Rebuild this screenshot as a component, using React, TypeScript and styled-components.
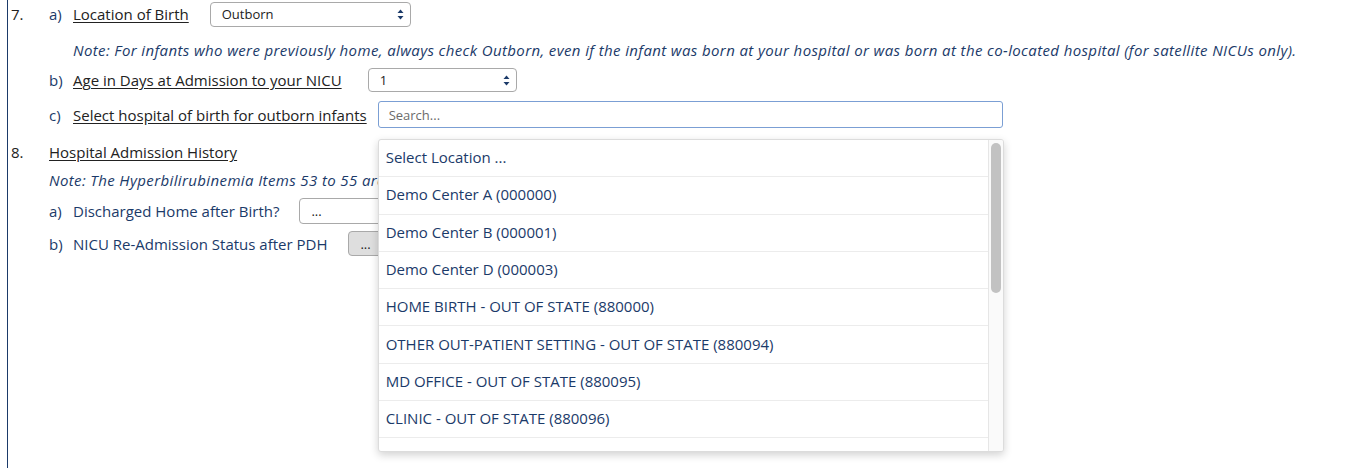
import React from "react";
import styled, { createGlobalStyle } from "styled-components";

const NAVY = "#1b3a69";
const INK = "#222222";

const Global = createGlobalStyle`
  html, body { margin: 0; padding: 0; background: #ffffff; }
  body { font-family: "Open Sans", "Noto Sans", Arial, sans-serif; font-size: 15px; color: ${INK}; }
  * { box-sizing: border-box; }
`;

const Page = styled.div`
  padding-left: 7px;
  min-height: 468px;
  overflow: hidden;
`;

const Section = styled.div`
  border-left: 1px solid ${NAVY};
  min-height: 468px;
  padding-left: 3px;
  display: flex;
  flex-direction: column;
`;

const Row = styled.div<{ $h: number; $mt: number }>`
  display: flex;
  align-items: center;
  height: ${(p) => p.$h}px;
  margin-top: ${(p) => p.$mt}px;
  position: relative;
`;

const Num = styled.span`
  width: 38px;
  flex: none;
  color: ${INK};
`;

const Letter = styled.span<{ $indent?: boolean }>`
  width: 24px;
  flex: none;
  color: ${NAVY};
  margin-left: ${(p) => (p.$indent ? 38 : 0)}px;
`;

const Label = styled.span<{ $under?: boolean }>`
  color: ${(p) => (p.$under ? INK : NAVY)};
  text-decoration: ${(p) => (p.$under ? "underline" : "none")};
  text-underline-offset: 2px;
  white-space: nowrap;
`;

const Note = styled.div<{ $indent: number }>`
  padding-left: ${(p) => p.$indent}px;
  font-style: italic;
  letter-spacing: 0.38px;
  color: ${NAVY};
  white-space: nowrap;
`;

const Select = styled.div<{ $w: number; $h: number; $ml: number; $gray?: boolean }>`
  flex: none;
  width: ${(p) => p.$w}px;
  height: ${(p) => p.$h}px;
  margin-left: ${(p) => p.$ml}px;
  border: 1px solid #a9a9a9;
  border-radius: 4px;
  background: ${(p) => (p.$gray ? "#dedede" : "#ffffff")};
  display: flex;
  align-items: center;
  justify-content: space-between;
  padding: 0 6px 0 11px;
  font-size: 13px;
  color: ${INK};
`;

const ControlWrap = styled.div<{ $ml: number }>`
  position: relative;
  margin-left: ${(p) => p.$ml}px;
  flex: none;
`;

const Search = styled.div`
  width: 625px;
  height: 27px;
  border: 1px solid #7b9fd4;
  border-radius: 3px;
  display: flex;
  align-items: center;
  padding-left: 10px;
  font-size: 13px;
  color: #6b6b6b;
  background: #fff;
`;

const Dropdown = styled.div`
  position: absolute;
  top: calc(100% + 11px);
  left: 0;
  width: 626px;
  height: 313px;
  background: #ffffff;
  border: 1px solid #dcdcdc;
  border-radius: 3px;
  box-shadow: 0 3px 8px rgba(0, 0, 0, 0.18);
  display: flex;
  overflow: hidden;
  z-index: 10;
`;

const List = styled.div`
  flex: 1;
  overflow: hidden;
`;

const Item = styled.div`
  height: 37.3px;
  border-bottom: 1px solid #ececec;
  display: flex;
  align-items: center;
  padding: 0 0 2px 7px;
  color: ${NAVY};
  white-space: nowrap;
`;

const Track = styled.div`
  width: 15px;
  flex: none;
  border-left: 1px solid #e6e6e6;
  background: #fafafa;
  padding: 3px 2px 0 2px;
`;

const Thumb = styled.div`
  height: 150px;
  border-radius: 5px;
  background: #c2c2c2;
`;

const Arrows = () => (
  <svg width="7" height="11" viewBox="0 0 7 11">
    <path d="M3.5 0.5 L6.5 4 H0.5 Z" fill={NAVY} />
    <path d="M3.5 10.5 L6.5 7 H0.5 Z" fill={NAVY} />
  </svg>
);

const items = [
  "Select Location ...",
  "Demo Center A (000000)",
  "Demo Center B (000001)",
  "Demo Center D (000003)",
  "HOME BIRTH - OUT OF STATE (880000)",
  "OTHER OUT-PATIENT SETTING - OUT OF STATE (880094)",
  "MD OFFICE - OUT OF STATE (880095)",
  "CLINIC - OUT OF STATE (880096)",
  "EMERGENCY ROOM - OUT OF STATE (880097)",
];

export default function App() {
  return (
    <Page>
      <Global />
      <Section>
        <Row $h={28} $mt={0}>
          <Num>7.</Num>
          <Letter>a)</Letter>
          <Label $under>Location of Birth</Label>
          <Select $w={201} $h={25} $ml={21}>
            <span>Outborn</span>
            <Arrows />
          </Select>
        </Row>
        <Row $h={20} $mt={12}>
          <Note $indent={62}>
            Note: For infants who were previously home, always check Outborn, even if the infant was born at your
            hospital or was born at the co-located hospital (for satellite NICUs only).
          </Note>
        </Row>
        <Row $h={24} $mt={8}>
          <Letter $indent>b)</Letter>
          <Label $under>Age in Days at Admission to your NICU</Label>
          <Select $w={149} $h={24} $ml={26}>
            <span>1</span>
            <Arrows />
          </Select>
        </Row>
        <Row $h={27} $mt={9}>
          <Letter $indent>c)</Letter>
          <Label $under>Select hospital of birth for outborn infants</Label>
          <ControlWrap $ml={11}>
            <Search>Search...</Search>
            <Dropdown>
              <List>
                {items.map((t) => (
                  <Item key={t}>{t}</Item>
                ))}
              </List>
              <Track>
                <Thumb />
              </Track>
            </Dropdown>
          </ControlWrap>
        </Row>
        <Row $h={20} $mt={14}>
          <Num>8.</Num>
          <Label $under>Hospital Admission History</Label>
        </Row>
        <Row $h={20} $mt={8}>
          <Note $indent={38}>
            Note: The Hyperbilirubinemia Items 53 to 55 are only required for infants discharged home after birth.
          </Note>
        </Row>
        <Row $h={26} $mt={8}>
          <Letter $indent>a)</Letter>
          <Label>Discharged Home after Birth?</Label>
          <Select $w={120} $h={26} $ml={20}>
            <span>...</span>
          </Select>
        </Row>
        <Row $h={25} $mt={7}>
          <Letter $indent>b)</Letter>
          <Label>NICU Re-Admission Status after PDH</Label>
          <Select $w={60} $h={25} $ml={21} $gray>
            <span>...</span>
          </Select>
        </Row>
      </Section>
    </Page>
  );
}
